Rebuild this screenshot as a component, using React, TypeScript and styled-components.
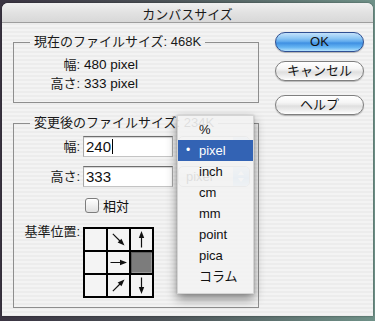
import React from "react";
import styled, { createGlobalStyle } from "styled-components";

const GlobalStyle = createGlobalStyle`
  html, body { margin: 0; padding: 0; }
  body {
    font-family: "Liberation Sans", "Noto Sans CJK JP", sans-serif;
    font-size: 13px;
    color: #111;
  }
`;

const Desktop = styled.div`
  width: 375px;
  height: 321px;
  overflow: hidden;
  background: linear-gradient(90deg, #3a3442 0%, #4d5458 45%, #6f9188 100%);
  padding-top: 3px;
  box-sizing: border-box;
`;

const Window = styled.div`
  position: relative;
  margin: 0 2px;
  height: 313px;
  border-radius: 6px 6px 0 0;
  overflow: hidden;
  display: flex;
  flex-direction: column;
  background: repeating-linear-gradient(
    180deg,
    #ececec 0px,
    #ececec 2px,
    #f3f3f3 2px,
    #f3f3f3 4px
  );
  box-shadow: 0 0 2px rgba(0, 0, 0, 0.5);
`;

const TitleBar = styled.div`
  height: 20px;
  border-bottom: 1px solid #9e9e9e;
  background: linear-gradient(180deg, #f0f0f0 0%, #e2e2e2 50%, #d8d8d8 100%);
  display: flex;
  align-items: center;
  justify-content: center;
  font-size: 13px;
  color: #1a1a1a;
  padding-top: 1px;
  box-sizing: border-box;
`;

const Body = styled.div`
  display: flex;
  padding: 11px 0 0 11px;
  gap: 16px;
`;

const LeftCol = styled.div`
  display: flex;
  flex-direction: column;
  width: 246px;
  gap: 12px;
`;

const Group = styled.fieldset<{ $pb: number; $pt: number }>`
  margin: 0;
  min-width: 0;
  border: 1px solid #8e8e8e;
  padding: ${(p) => p.$pt}px 0 ${(p) => p.$pb}px 0;
`;

const Legend = styled.legend`
  margin-left: 16px;
  padding: 0 4px;
  line-height: 16px;
  font-size: 13px;
  color: #1a1a1a;
`;

const InfoGrid = styled.div`
  display: grid;
  grid-template-columns: 66px auto;
  column-gap: 4px;
  line-height: 19px;
`;

const Label = styled.div<{ $lh?: number }>`
  text-align: right;
  white-space: nowrap;
  line-height: ${(p) => p.$lh ?? 21}px;
  color: #1a1a1a;
`;

const Value = styled.div`
  white-space: nowrap;
  font-size: 13.5px;
`;

const FormGrid = styled.div`
  display: grid;
  grid-template-columns: 66px auto;
  column-gap: 3px;
  row-gap: 9px;
`;

const FieldRow = styled.div`
  display: flex;
  gap: 5px;
  align-items: center;
`;

const TextInput = styled.div`
  width: 90px;
  height: 21px;
  box-sizing: border-box;
  background: #fff;
  border: 1px solid #a9a9a9;
  border-top-color: #6e6e6e;
  border-bottom-color: #c4c4c4;
  box-shadow: inset 0 1px 1px rgba(0, 0, 0, 0.18);
  font-size: 15px;
  line-height: 19px;
  padding-left: 2px;
  display: flex;
  align-items: center;
`;

const Caret = styled.span`
  display: inline-block;
  width: 1px;
  height: 15px;
  background: #000;
  margin-left: 1px;
`;

const Popup = styled.div`
  width: 72px;
  height: 21px;
  box-sizing: border-box;
  border: 1px solid #9a9a9a;
  border-radius: 5px;
  background: linear-gradient(180deg, #ffffff 0%, #f1f1f1 50%, #e4e4e4 51%, #f6f6f6 100%);
  display: flex;
  align-items: center;
  justify-content: space-between;
  padding-left: 7px;
  font-size: 13px;
  overflow: hidden;
`;

const Stepper = styled.div`
  width: 16px;
  align-self: stretch;
  background: linear-gradient(180deg, #cfe5f9 0%, #9cc8f0 50%, #86bbee 51%, #c2e2fa 100%);
  display: flex;
  align-items: center;
  justify-content: center;
`;

const CheckRow = styled.label`
  display: flex;
  align-items: center;
  gap: 4px;
  height: 18px;
  margin-left: 2px;
  font-size: 13px;
`;

const CheckBox = styled.span`
  width: 14px;
  height: 15px;
  box-sizing: border-box;
  border: 1px solid #7d7d7d;
  border-radius: 3px;
  background: linear-gradient(180deg, #ffffff 0%, #f0f0f0 50%, #e0e0e0 100%);
  box-shadow: inset 0 1px 1px rgba(255, 255, 255, 0.9);
`;

const AnchorGrid = styled.div`
  margin-top: 4px;
  display: grid;
  grid-template-columns: repeat(3, 21px);
  grid-template-rows: repeat(3, 21px);
  gap: 2px;
  padding: 2px;
  background: #000;
  width: fit-content;
`;

const Cell = styled.div<{ $filled?: boolean }>`
  background: ${(p) => (p.$filled ? "#7c7c7c" : "#f4f4f4")};
  box-shadow: ${(p) =>
    p.$filled ? "inset 1px 1px 0 #5e5e5e, inset -1px -1px 0 #999" : "none"};
  display: flex;
  align-items: center;
  justify-content: center;
`;

const ButtonCol = styled.div`
  display: flex;
  flex-direction: column;
  margin-top: -2px;
  width: 89px;
`;

const AquaButton = styled.button<{ $primary?: boolean; $mt: number }>`
  margin-top: ${(p) => p.$mt}px;
  height: 20px;
  width: 89px;
  border-radius: 10px;
  border: 1px solid ${(p) => (p.$primary ? "#2f4f92" : "#7f7f7f")};
  font-family: "Liberation Sans", "Noto Sans CJK JP", sans-serif;
  font-size: 13px;
  color: #111;
  padding: 0;
  line-height: 18px;
  background: ${(p) =>
    p.$primary
      ? "linear-gradient(180deg, #c4e2fb 0%, #8cc6f4 30%, #5aa6ec 50%, #3e8fe2 55%, #67b6f3 80%, #b4e2fc 100%)"
      : "linear-gradient(180deg, #ffffff 0%, #f6f6f6 35%, #e9e9e9 50%, #dedede 55%, #f2f2f2 85%, #ffffff 100%)"};
  box-shadow: 0 1px 1px rgba(0, 0, 0, 0.25);
`;

const Menu = styled.div`
  position: absolute;
  left: 175px;
  top: 112px;
  width: 75px;
  padding: 3px 0 6px;
  background: rgba(243, 243, 243, 0.9);
  border: 1px solid rgba(0, 0, 0, 0.12);
  box-shadow: 0 5px 10px rgba(0, 0, 0, 0.45), 0 0 2px rgba(0, 0, 0, 0.2);
`;

const MenuItem = styled.div<{ $selected?: boolean }>`
  position: relative;
  height: 21px;
  line-height: 21px;
  padding-left: 21px;
  font-size: 13px;
  color: ${(p) => (p.$selected ? "#fff" : "#111")};
  background: ${(p) => (p.$selected ? "#3363b4" : "transparent")};
`;

const Bullet = styled.span`
  position: absolute;
  left: 8px;
  top: 0;
  font-size: 12px;
`;

function Arrow({ angle }: { angle: number }) {
  return (
    <svg width="21" height="21" viewBox="0 0 21 21">
      <g transform={`rotate(${angle} 10.5 10.5)`}>
        <line x1="2.5" y1="10.5" x2="14" y2="10.5" stroke="#111" strokeWidth="1.2" />
        <polygon points="19,10.5 12,7.8 12,13.2" fill="#111" />
      </g>
    </svg>
  );
}

function StepArrows() {
  return (
    <svg width="8" height="13" viewBox="0 0 8 13">
      <polygon points="4,1 7,5 1,5" fill="#fff" />
      <polygon points="4,12 7,8 1,8" fill="#fff" />
    </svg>
  );
}

const units = ["%", "pixel", "inch", "cm", "mm", "point", "pica", "コラム"];

const anchors: Array<{ a?: number; filled?: boolean }> = [
  {}, { a: 45 }, { a: -90 },
  {}, { a: 0 }, { filled: true },
  {}, { a: -45 }, { a: 90 },
];

export default function App() {
  return (
    <>
      <GlobalStyle />
      <Desktop>
        <Window>
          <TitleBar>カンバスサイズ</TitleBar>
          <Body>
            <LeftCol>
              <Group $pt={5} $pb={9}>
                <Legend>現在のファイルサイズ: 468K</Legend>
                <InfoGrid>
                  <Label $lh={19}>幅:</Label>
                  <Value>480 pixel</Value>
                  <Label $lh={19}>高さ:</Label>
                  <Value>333 pixel</Value>
                </InfoGrid>
              </Group>
              <Group $pt={5} $pb={9}>
                <Legend>変更後のファイルサイズ: 234K</Legend>
                <FormGrid>
                  <Label>幅:</Label>
                  <FieldRow>
                    <TextInput>
                      240
                      <Caret />
                    </TextInput>
                    <Popup>
                      pixel
                      <Stepper>
                        <StepArrows />
                      </Stepper>
                    </Popup>
                  </FieldRow>
                  <Label>高さ:</Label>
                  <FieldRow>
                    <TextInput>333</TextInput>
                    <Popup>
                      pixel
                      <Stepper>
                        <StepArrows />
                      </Stepper>
                    </Popup>
                  </FieldRow>
                  <div />
                  <CheckRow>
                    <CheckBox />
                    相対
                  </CheckRow>
                  <Label $lh={18}>基準位置:</Label>
                  <AnchorGrid>
                    {anchors.map((c, i) => (
                      <Cell key={i} $filled={c.filled}>
                        {c.a !== undefined && <Arrow angle={c.a} />}
                      </Cell>
                    ))}
                  </AnchorGrid>
                </FormGrid>
              </Group>
            </LeftCol>
            <ButtonCol>
              <AquaButton $primary $mt={0}>OK</AquaButton>
              <AquaButton $mt={9}>キャンセル</AquaButton>
              <AquaButton $mt={14}>ヘルプ</AquaButton>
            </ButtonCol>
          </Body>
          <Menu>
            {units.map((u) => (
              <MenuItem key={u} $selected={u === "pixel"}>
                {u === "pixel" && <Bullet>•</Bullet>}
                {u}
              </MenuItem>
            ))}
          </Menu>
        </Window>
      </Desktop>
    </>
  );
}
